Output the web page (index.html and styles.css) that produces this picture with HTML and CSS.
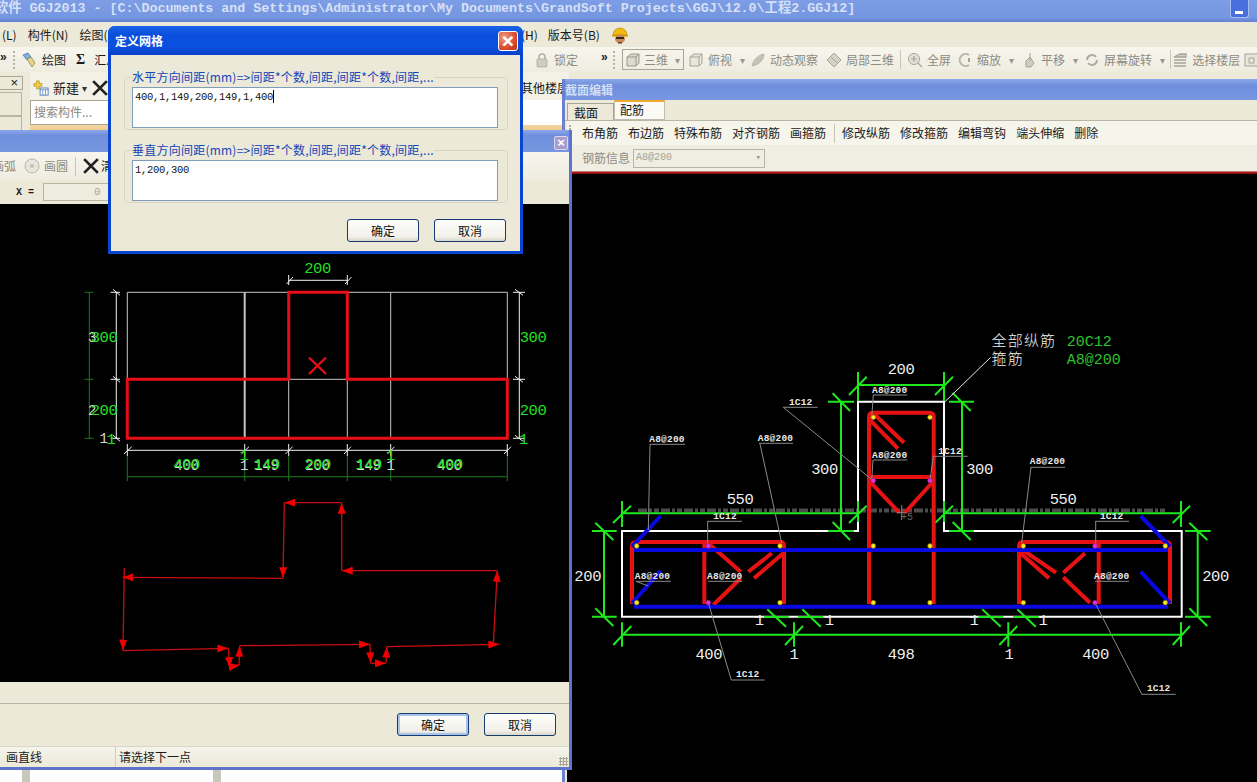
FILE: index.html
```html
<!DOCTYPE html>
<html lang="zh-CN">
<head>
<meta charset="utf-8">
<title>GGJ2013</title>
<link rel="stylesheet" href="styles.css">
</head>
<body>
<div class="desktop">

  <div class="app">
    <div class="app-title">
      <span class="app-title-text">软件 GGJ2013 - [C:\Documents and Settings\Administrator\My Documents\GrandSoft Projects\GGJ\12.0\工程2.GGJ12]</span>
      <span class="win-min"><i></i></span>
    </div>

    <div class="menu">
      <div class="menu-left">
        <span>(L)</span><span>构件(N)</span><span>绘图(D)</span>
      </div>
      <div class="menu-right">
        <span>(H)</span><span>版本号(B)</span>
        <svg class="helmet" viewBox="0 0 16 18"><path d="M1 9a7 7 0 0 1 14 0z" fill="#f2b90f" stroke="#a87a00" stroke-width=".6"/><path d="M0 9h16v1.6H0z" fill="#d69a00"/><ellipse cx="8" cy="13" rx="5" ry="4.4" fill="#c98a5a"/><path d="M4 11h8v2H4z" fill="#3a2418"/><path d="M6 16h4v1.5H6z" fill="#7a3a22"/></svg>
      </div>
    </div>

    <div class="tools">
      <div class="tools-left">
        <span class="chev">»</span><span class="grip grip-l"></span>
        <svg class="ic" viewBox="0 0 16 16"><path d="M2 3l5-2 3 4-4 3z" fill="#7fb2dc" stroke="#3c6a98" stroke-width=".7"/><path d="M6 7l4-2 4 6-3 4z" fill="#e5d48a" stroke="#8a7a3a" stroke-width=".7"/></svg>
        <span>绘图</span>
        <b class="sigma">Σ</b><span>汇总</span>
      </div>
      <div class="tools-right">
        <svg class="ic" viewBox="0 0 16 16"><path d="M5 7V5a3 3 0 0 1 6 0v2" fill="none" stroke="#b4b0a4" stroke-width="1.5"/><rect x="3" y="7" width="10" height="8" rx="1" fill="#cfccc0" stroke="#a8a498" stroke-width=".7"/></svg>
        <span class="off t-lock">锁定</span>
        <span class="chev t-chev">»</span><span class="grip"></span>
        <span class="combo3d">
          <svg class="ic" viewBox="0 0 16 16"><path d="M2 5l4-3h8v9l-3 3H2z" fill="#dcd9cd" stroke="#9a968a"/><path d="M2 5h9v9M11 5l3-3" fill="none" stroke="#9a968a"/></svg>
          <span class="off">三维</span><span class="caret">▾</span>
        </span>
        <svg class="ic" viewBox="0 0 16 16"><path d="M2 5l4-3h8v9l-3 3H2z" fill="#e8e5da" stroke="#a8a498"/><path d="M2 5h9v9M11 5l3-3" fill="none" stroke="#a8a498"/></svg>
        <span class="off">俯视</span><span class="caret">▾</span>
        <svg class="ic" viewBox="0 0 16 16"><path d="M2 14C3 8 8 3 14 2c0 6-5 11-12 12z" fill="#c6c3b6" stroke="#a8a498" stroke-width=".6"/></svg>
        <span class="off">动态观察</span>
        <svg class="ic i-local" viewBox="0 0 16 16"><path d="M8 1l7 7-7 7-7-7z" fill="#d4d1c5" stroke="#a8a498"/><path d="M4 4l8 8" stroke="#a8a498"/></svg>
        <span class="off">局部三维</span>
        <span class="sep"></span>
        <svg class="ic" viewBox="0 0 16 16"><circle cx="7" cy="7" r="5.5" fill="#e4e2d8" stroke="#a8a498"/><path d="M7 4v6M4 7h6M11 11l4 4" stroke="#a8a498" stroke-width="1.2"/></svg>
        <span class="off">全屏</span>
        <svg class="ic i-orbit" viewBox="0 0 16 16"><path d="M12 3a6 6 0 1 0 0 10" fill="none" stroke="#b8b5a8" stroke-width="2"/><path d="M12 6v4" stroke="#a8a498" stroke-width="2"/></svg>
        <span class="off">缩放</span><span class="caret">▾</span>
        <svg class="ic i-orbit" viewBox="0 0 16 16"><path d="M9 1v8M5 9l4-4 4 6-3 4H5z" fill="#d0cdc0" stroke="#a8a498"/></svg>
        <span class="off">平移</span><span class="caret">▾</span>
        <svg class="ic i-rot" viewBox="0 0 16 16"><path d="M3 8a5 5 0 0 1 9-3M13 8a5 5 0 0 1-9 3" fill="none" stroke="#aab0a4" stroke-width="2"/></svg>
        <span class="off">屏幕旋转</span><span class="caret">▾</span>
        <span class="sep sep-tight"></span>
        <svg class="ic i-floor" viewBox="0 0 16 16"><path d="M2 5l6-3h6v3H2zM2 8h12M2 11h12M2 14h12" fill="#d4d1c5" stroke="#a8a498" stroke-width="1.3"/></svg>
        <span class="off">选择楼层</span>
        <svg class="ic" viewBox="0 0 16 16"><rect x="1" y="2" width="13" height="12" fill="#e8e5da" stroke="#a8a498"/><path d="M5 6h5v5H5z" fill="none" stroke="#a8a498"/></svg>
      </div>
    </div>

    <div class="app-body">
      <div class="side">
        <div class="side-tab">×</div>
        <div class="side-box"></div>
        <div class="side-box short"></div>
      </div>
      <div class="pane">
        <div class="pane-bar">
          <div class="pane-tools">
            <svg class="ic" viewBox="0 0 18 18"><path d="M4 1h3v3h3v3H7v3H4V7H1V4h3z" fill="#f2d04a" stroke="#a88a1a" stroke-width=".7"/><rect x="8" y="9" width="9" height="8" fill="#fff" stroke="#4a78b0"/><path d="M8 11h9M11 11v6M14 11v6" stroke="#4a78b0" stroke-width=".8"/></svg>
            <span class="new-label">新建</span><span class="caret dark">▾</span>
            <svg class="ic x-ic" viewBox="0 0 14 14"><path d="M1 1l12 12M13 1L1 13" stroke="#222" stroke-width="2.4"/></svg>
          </div>
          <span class="pane-other">其他楼层</span>
        </div>
        <div class="pane-search"><span class="search">搜索构件...</span></div>
        <div class="pane-strip"></div>
      </div>
    </div>

    <div class="app-foot">
      <span class="foot-a"></span><span class="foot-bar"></span><span class="foot-b"></span><span class="foot-bar"></span>
    </div>
  </div>

  <!-- 截面编辑 window -->
  <section class="win win-section">
    <header class="sec-title">截面编辑</header>
    <div class="sec-tabs">
      <span class="tab">截面</span><span class="tab tab-on">配筋</span>
    </div>
    <div class="sec-bar">
      <span class="grip2"></span>
      <span>布角筋</span><span>布边筋</span><span>特殊布筋</span><span>对齐钢筋</span><span>画箍筋</span>
      <span class="sep"></span>
      <span>修改纵筋</span><span>修改箍筋</span><span>编辑弯钩</span><span>端头伸缩</span><span>删除</span>
    </div>
    <div class="sec-info">
      <span class="grip2"></span>
      <span class="off">钢筋信息</span>
      <span class="sec-combo"><span>A8@200</span><span class="caret">▾</span></span>
    </div>
    <div class="sec-rule"></div>
    <svg class="cad cad-right" viewBox="567 174 690 608">
      <path class="dots" d="M638 510.5H1167"/>

      <path class="sec-outline" d="M622 531H858V401.7H944V531H1181.7V616.7H622Z"/>

      <path class="g" d="M858 385H944M849 395L866.7 376.7M858 372V401M935 395L953 376.7M944 372V401"/>
      <path class="g" d="M841 401.7V531M828 401.7H854M832.7 393.3L850 411M828 531H854M832.7 522L850 540"/>
      <path class="g" d="M962 401.7V531M949 401.7H974M952.7 393L970.7 411M949 531H974M952.7 522L970.7 540"/>
      <path class="g" d="M622 513.3H858M613 523L631 505.7M622 501V527M849 523L866.7 505.7M858 501V522"/>
      <path class="g" d="M944 513.3H1181.7M935 523L953 505.7M944 501V522M1172.7 523L1190 505.7M1181 501V527"/>
      <path class="g" d="M604 531V616.7M592 531H616.7M595.3 522.7L613.3 540M592 616.7H616.7M595.3 608.3L613.3 626"/>
      <path class="g" d="M1197.7 531V616.7M1185 531H1210.7M1189.3 522.7L1207.3 540M1185 616.7H1210.7M1189.3 608.3L1207.3 626"/>
      <path class="g" d="M622 634.7H1181.7M622 622.3V646.7M613.3 645L631.3 626M794 622.3V646.7M785 645L803 626M1008.3 622.3V646.7M999.3 645L1017.3 626M1181 622.3V646.7M1172.7 645L1190 626"/>
      <path class="g" d="M764 617H788.7M767.3 609.3L786 626.7M798 617H823.3M802.3 609.3L820.7 626.7M978.3 617H1003.3M982.3 609.3L1000.7 626.7M1013 617H1038.7M1017.3 609.3L1035.7 626.7"/>

      <path class="red" d="M632 604V546Q632 542 636 542H780Q784 542 784 546V604M704.3 542V604M708.3 543.3L740.7 571.7M740.7 578.3L713.3 605M771.7 553.3L748.3 571.7M783.3 553.3L754 578.3"/>
      <path class="red" d="M869 604V417Q869 412.7 873 412.7H929Q933.7 412.7 933.7 417V604M869 477H933.7M873 413L904 442.7M870 420L898 448.7M870 481.7L899.3 512.7M931.7 483L905 512.7"/>
      <path class="red" d="M1019 604V546Q1019 542 1023 542H1166Q1170 542 1170 546V604M1098.7 542V604M1022.7 550L1056 572.7M1020 552.7L1049 578.3M1085 553.3L1063.3 572.7M1063.3 577.3L1090 602.7"/>
      <path class="blue" d="M634 550H1168M634 606.7H1168M632 546.7L660.7 516M632 603.3L660.7 570.7M1170 546.7L1140.7 516M1170 603.3L1140.7 571.7"/>

      <path class="leader" d="M650 444.3H685M650 444.3L648.3 530M759 443.3H793M760 444L781.7 543M783.3 407.3H817.7M783.3 407.3L873.3 480.7M873 395H907.3M873.3 395L871.7 417.3M873 460H907.3M873 460L871.7 480.7M707.7 521.3H742M707.7 521V546M636 581.3H671M636 581.3L648.3 586M708 581.3H742M731.3 680H764.7M731.3 680L708.3 602.7M933.3 456.3H967.7M933.3 456L930 480.7M1031 467.3H1065M1031 467L1021.7 543M1095.7 521.3H1129M1095.7 521V546M1095 581.3H1129M1141.7 694.3H1175.7M1141.7 694L1095 602.7M901.7 505V520M897 512.7H906"/>
      <path class="whiteline" d="M945 401.7L990.7 357.3"/>

      <g class="dots-y">
        <circle cx="636.7" cy="546" r="2.4"/><circle cx="780" cy="546" r="2.4"/><circle cx="636.7" cy="602.7" r="2.4"/><circle cx="780" cy="602.7" r="2.4"/><circle cx="873.3" cy="417.3" r="2.4"/><circle cx="873.3" cy="546" r="2.4"/><circle cx="873.3" cy="602.7" r="2.4"/><circle cx="930" cy="417.3" r="2.4"/><circle cx="930" cy="546" r="2.4"/><circle cx="930" cy="602.7" r="2.4"/><circle cx="1023.3" cy="546" r="2.4"/><circle cx="1023.3" cy="602.7" r="2.4"/><circle cx="1165.3" cy="546" r="2.4"/><circle cx="1165.3" cy="602.7" r="2.4"/>
      </g>
      <g class="dots-m">
        <circle cx="708.3" cy="546" r="2.4"/><circle cx="708.3" cy="602.7" r="2.4"/><circle cx="873.3" cy="480.7" r="2.4"/><circle cx="930" cy="480.7" r="2.4"/><circle cx="1095" cy="546" r="2.4"/><circle cx="1095" cy="602.7" r="2.4"/>
      </g>

      <g class="dimw">
        <text x="901" y="374">200</text><text x="824.5" y="474">300</text><text x="979.5" y="474">300</text>
        <text x="740" y="504">550</text><text x="1063" y="504">550</text>
        <text x="587.7" y="581">200</text><text x="1215.5" y="581">200</text>
        <text x="708.8" y="659">400</text><text x="794" y="659">1</text><text x="901" y="659">498</text><text x="1009" y="659">1</text><text x="1095.5" y="659">400</text>
        <text x="759.3" y="625">1</text><text x="829.3" y="625">1</text><text x="974" y="625">1</text><text x="1043" y="625">1</text>
      </g>
      <g class="lbl">
        <text x="667" y="441.7">A8@200</text><text x="775.5" y="440.7">A8@200</text><text x="800.7" y="404.7">1C12</text><text x="889.7" y="392.7">A8@200</text><text x="889.7" y="457.7">A8@200</text><text x="725" y="518.7">1C12</text><text x="652.5" y="578.7">A8@200</text><text x="724.8" y="578.7">A8@200</text><text x="747.7" y="676.7">1C12</text><text x="950" y="453.7">1C12</text><text x="1047.5" y="464.3">A8@200</text><text x="1111.7" y="518.7">1C12</text><text x="1111.8" y="578.7">A8@200</text><text x="1158.7" y="690.7">1C12</text>
      </g>
      <text class="mini" x="901" y="520">+5</text>
      <text class="cn" x="991.5" y="346">全部纵筋</text>
      <text class="cn" x="991.5" y="364">箍筋</text>
      <text class="cn-g" x="1066.7" y="346">20C12</text>
      <text class="cn-g" x="1066.7" y="364">A8@200</text>
    </svg>
  </section>

  <!-- 绘图 dialog behind 定义网格 -->
  <section class="win win-draw">
    <header class="draw-title"><span class="draw-close">×</span></header>
    <div class="draw-bar">
      <span class="off clip-arc">画弧</span>
      <svg class="ic i-radio" viewBox="0 0 16 16"><circle cx="8" cy="8" r="7" fill="#e8e6dc" stroke="#b8b5a8"/><circle cx="8" cy="8" r="2" fill="#c4c1b4"/></svg>
      <span class="off">画圆</span>
      <span class="sep"></span>
      <svg class="ic" viewBox="0 0 14 14"><path d="M1 1l12 12M13 1L1 13" stroke="#222" stroke-width="2.4"/></svg>
      <span class="clear">清除</span>
    </div>
    <div class="draw-coord">
      <span class="coord-label">X =</span>
      <span class="coord-input">0</span>
    </div>
    <svg class="cad cad-left" viewBox="0 204 569 478">
      <defs>
        <marker id="ah" markerUnits="userSpaceOnUse" markerWidth="12" markerHeight="8" refX="11" refY="4" orient="auto"><path d="M0 0L11 4L0 8Z" fill="#f00000"/></marker>
      </defs>
      <path class="grid" d="M127.3 292.3H507.3M127.3 379.3H507.3M127.3 292.3V438.3M288.7 292.3V438.3M347.3 292.3V438.3M390.7 292.3V438.3M507.3 292.3V438.3"/>
      <path class="grid thick" d="M244.7 292.3V438.3"/>
      <path class="tshape" d="M288.7 292.3H347.3V379.3H507.3V438.3H127.3V379.3H288.7Z"/>
      <path class="xmark" d="M309 357.5L326 374M326 357.5L309 374"/>

      <path class="wdim" d="M288.7 280.3H347.3M286.5 284L293 277M288.7 275V285M345 284L351.5 277M347.3 275V285"/>
      <path class="wdim" d="M116.3 292.3V438.3M110.7 292.3H120M113 289.3L120 295.3M110.7 379.3H120M113 376.3L120 382.3M110.7 438.3H120M113 435.3L120 441.3"/>
      <path class="wdim" d="M519.3 292.3V438.3M513 292.3H525M515 289.3L523 295.3M513 379.3H525M515 376.3L523 382.3M513 438.3H525M515 435.3L523 441.3"/>
      <path class="wdim" d="M127.3 450.3H507.3M124 454L131.7 446.7M127.3 444V456M241.5 454L249 446.7M244.7 444V456M285.5 454L292.5 446.7M288.7 444V456M344 454L351 446.7M347.3 444V456M387.5 454L394.5 446.7M390.7 444V456M504 454L511 446.7M507.3 444V456"/>
      <path class="ddim" d="M89.3 292.3V438.3M84.7 292.3H93.3M84.7 379.3H93.3M84.7 438.3H93.3M127.3 456V481M244.7 456V481M288.7 456V481M347.3 456V481M390.7 456V481M507.3 456V481M127.3 476.7H507.3"/>

      <path class="arrow" marker-end="url(#ah)" d="M341.7 502.7H284.3"/>
      <path class="arrow" marker-end="url(#ah)" d="M284.3 502.7L283 578.3"/>
      <path class="arrow" marker-end="url(#ah)" d="M283 578.3L122.5 577.3"/>
      <path class="arrow" marker-end="url(#ah)" d="M124.3 568L123 650.5"/>
      <path class="arrow" marker-end="url(#ah)" d="M122.7 650.7L228.3 648.3"/>
      <path class="arrow" marker-end="url(#ah)" d="M228.3 648.3L230 668"/>
      <path class="arrow" marker-end="url(#ah)" d="M230 667L239.5 665"/>
      <path class="arrow" marker-end="url(#ah)" d="M239 665L239.7 645.7"/>
      <path class="arrow" marker-end="url(#ah)" d="M239.7 645.7L370 644.3"/>
      <path class="arrow" marker-end="url(#ah)" d="M370 644.3L370.7 663.3"/>
      <path class="arrow" marker-end="url(#ah)" d="M370.7 663.3H386"/>
      <path class="arrow" marker-end="url(#ah)" d="M386 663.3L386.7 646.7"/>
      <path class="arrow" marker-end="url(#ah)" d="M386.7 646.7L499.3 644.3"/>
      <path class="arrow" marker-end="url(#ah)" d="M493.3 644.3L497.3 570.7"/>
      <path class="arrow" marker-end="url(#ah)" d="M497.3 570.7H341.7"/>
      <path class="arrow" marker-end="url(#ah)" d="M341.7 570.7V502.7"/>

      <g class="ghost">
        <text x="92" y="341.5">3</text><text x="92" y="415">2</text><text x="103.5" y="443">1</text>
        <text x="186.5" y="469.6">400</text><text x="266.5" y="469.6">149</text><text x="317.5" y="469.6">200</text><text x="368.5" y="469.6">149</text><text x="449.5" y="469.6">400</text>
        <text x="244" y="470">1</text><text x="390.5" y="470">1</text>
      </g>
      <g class="dimg">
        <text x="317.5" y="272.7">200</text>
        <text x="104" y="341.7">300</text><text x="104" y="415">200</text><text x="111" y="443.5">1</text>
        <text x="533" y="341.7">300</text><text x="533" y="415">200</text><text x="523.5" y="443.5">1</text>
        <text x="186.5" y="469">400</text><text x="266.5" y="469">149</text><text x="317.5" y="469">200</text><text x="368.5" y="469">149</text><text x="449.5" y="469">400</text>
        <text x="244" y="460">1</text><text x="390.5" y="460">1</text>
      </g>
    </svg>
    <div class="draw-foot">
      <div class="draw-gap"></div>
      <div class="draw-btns">
        <button class="xp-btn xp-default">确定</button>
        <button class="xp-btn">取消</button>
      </div>
    </div>
    <div class="status">
      <span class="st-a">画直线</span><span class="st-b">请选择下一点</span><span class="st-grip"></span>
    </div>
  </section>

  <!-- 定义网格 dialog -->
  <section class="win win-grid">
    <header class="grid-title"><span>定义网格</span><span class="grid-close">×</span></header>
    <div class="grid-body">
      <fieldset class="fs">
        <legend>水平方向间距(mm)=&gt;间距*个数,间距,间距*个数,间距,...</legend>
        <div class="ta">400,1,149,200,149,1,400<i class="caret-i"></i></div>
      </fieldset>
      <fieldset class="fs">
        <legend>垂直方向间距(mm)=&gt;间距*个数,间距,间距*个数,间距,...</legend>
        <div class="ta">1,200,300</div>
      </fieldset>
      <div class="grid-btns">
        <button class="xp-btn">确定</button>
        <button class="xp-btn">取消</button>
      </div>
    </div>
  </section>
</div>
</body>
</html>
```

FILE: styles.css
```css
* { box-sizing: border-box; }
html, body { margin: 0; padding: 0; }
body {
  width: 1257px; height: 782px; overflow: hidden;
  font: 12px/16px "Noto Sans CJK SC", "Liberation Sans", sans-serif;
  color: #1a1a1a; background: #ece9d8;
}
.desktop { position: relative; width: 1257px; height: 782px; overflow: hidden; }
.app { display: flex; flex-direction: column; height: 782px; }

.app-title {
  height: 22px; flex: none; display: flex; justify-content: space-between;
  background: linear-gradient(#7d9de6, #7596e0 80%, #6480d2);
  overflow: hidden; padding-right: 8px;
}
.app-title-text {
  margin-left: -5px; white-space: nowrap;
  font: 700 13.32px/18px "Liberation Mono", "Noto Sans CJK SC", monospace;
  color: #d6e0f6;
}
.win-min {
  width: 19px; height: 18px; background: #4a6fdc; border: 1px solid #a6bdf0; border-top: 0;
  border-radius: 0 0 3px 3px; display: flex; align-items: flex-end; padding: 0 0 3px 4px;
}
.win-min i { width: 8px; height: 3px; background: #fff; }

.menu { height: 25px; flex: none; display: flex; align-items: center; background: #ece9d8; }
.menu-left { width: 521px; flex: none; display: flex; gap: 11px; padding-left: 2px; }
.menu-right { display: flex; align-items: center; gap: 10px; }
.helmet { width: 16px; height: 18px; margin-left: 2px; }

.tools {
  height: 25px; flex: none; display: flex; align-items: center;
  background: linear-gradient(#f7f6ee, #efecdf);
}
.tools-left { width: 534px; flex: none; display: flex; align-items: center; gap: 5px; }
.tools-right { display: flex; align-items: center; gap: 4px; white-space: nowrap; flex: none; }
.ic { width: 16px; height: 16px; flex: none; }
.off { color: #8d8b82; }
.chev { font: 700 12px/14px "Liberation Sans", sans-serif; color: #222; margin-top: -6px; width: 8px; }
.grip { width: 3px; height: 18px; margin: 0 2px 0 0; border-left: 2px dotted #b5b2a4; flex: none; }
.grip-l { margin: 0; }
.sigma { font: 700 14px "Liberation Serif", serif; margin-left: 5px; margin-right: 4px; }
.t-lock { margin-right: 19px; }
.combo3d {
  width: 62px; height: 21px; display: flex; align-items: center; gap: 3px; padding-left: 2px;
  border: 1px solid #a9a594;
}
.caret { font-size: 10px; color: #9a988e; margin: 0 1px 0 4px; line-height: 12px; }
.caret.dark { color: #333; margin: 0; }
.combo3d .caret { margin: 0 0 0 4px; }
.sep { width: 1px; height: 19px; background: #c8c5b6; margin: 0 2px; flex: none; }
.sep-tight { margin-left: 0; }
.i-orbit { margin-left: 2px; }
.i-local { margin-left: 4px; }
.i-rot { margin-left: 1px; }
.i-floor { margin-left: -5px; }

.app-body { flex: 1; display: flex; background: #ece9d8; }
.side { width: 30px; flex: none; padding-top: 4px; }
.side-tab {
  width: 23px; height: 14px; border: 1px solid #aaa794; border-left: 0; text-align: right;
  padding-right: 4px; font: 13px/12px "Liberation Sans", sans-serif;
}
.side-box { width: 22px; height: 24px; margin-top: 2px; border: 1px solid #b8b5a4; border-left: 0; }
.side-box.short { height: 16px; margin-top: 0; }
.pane { width: 539px; flex: none; display: flex; flex-direction: column; }
.pane-bar {
  height: 28px; flex: none; display: flex; align-items: center; justify-content: space-between;
  background: #f3f1e6; padding: 4px 0 0 3px;
}
.pane-tools { display: flex; align-items: center; gap: 3px; }
.new-label { font-size: 13px; margin-left: 1px; }
.x-ic { margin-left: 2px; }
.pane-other { white-space: nowrap; }
.pane-search { height: 25px; flex: none; background: #fff; }
.search {
  display: block; width: 78px; height: 25px; border: 1px solid #a9a594; border-right: 0;
  color: #8a8880; font-size: 12px; line-height: 21px; padding-left: 3px;
}
.pane-strip { height: 6px; flex: none; background: linear-gradient(#f4d6a0, #eec98c); }
.app-foot { height: 12px; flex: none; display: flex; background: #fff; }
.foot-a { width: 22px; }
.foot-b { width: 183px; }
.foot-bar { width: 8px; background: #c9c8be; }

.win { position: absolute; }

/* section window */
.win-section {
  left: 562px; top: 79px; width: 695px; height: 703px;
  display: flex; flex-direction: column; background: #ece9d8;
  border-left: 3px solid #6b80d0;
}
.sec-title {
  height: 21px; flex: none;
  background: linear-gradient(#8aa7ea, #6f8fdc 30%, #7797e2);
  color: #d4def5; font-weight: 700; font-size: 12px; line-height: 22px;
}
.sec-tabs {
  height: 21px; flex: none; display: flex; align-items: flex-end; padding-left: 2px;
  border-bottom: 1px solid #b9b6a6;
}
.tab {
  width: 47px; height: 17px; background: #ece9d8; border: 1px solid #a9a594; border-bottom: 0;
  padding-left: 6px; line-height: 18px; font-size: 12px;
}
.tab-on {
  width: 51px; height: 20px; background: #fbfaf5; border: 1px solid #c0bdae; border-top: 2px solid #f0a830;
  padding-left: 5px; line-height: 15px;
}
.sec-bar {
  height: 24px; flex: none; display: flex; align-items: center; gap: 10px; padding: 0 0 0 2px;
  background: #f6f5ec; margin-left: 2px;
}
.sec-bar .sep { margin: 0 -3px 0 -2px; }
.grip2 { width: 3px; height: 16px; border-left: 2px dotted #b5b2a4; flex: none; }
.sec-info {
  height: 26px; flex: none; display: flex; align-items: center; padding-left: 2px; margin-left: 2px;
  background: #f0eee2;
}
.sec-info .off { margin-left: 10px; }
.sec-combo {
  width: 132px; height: 19px; margin-left: 3px; border: 1px solid #b8b5a4;
  display: flex; align-items: center; justify-content: space-between;
  color: #a5a398; font: 10px/14px "Liberation Mono", monospace; padding-left: 2px;
}
.sec-combo .caret { margin: 0 3px 0 0; font-size: 9px; }
.sec-rule { height: 3px; flex: none; margin-left: 2px; background: linear-gradient(#ecd9c8, #a81818 34%, #8a1010); }
.cad { display: block; background: #000; flex: none; }
.cad-right { width: 690px; height: 608px; margin-left: 2px; }
.cad text { white-space: pre; }
.sec-outline { fill: none; stroke: #fff; stroke-width: 2; }
.g { fill: none; stroke: #1fe81f; stroke-width: 2; }
.red { fill: none; stroke: #e81212; stroke-width: 4; }
.blue { fill: none; stroke: #0808e0; stroke-width: 4; }
.leader { fill: none; stroke: #8a8a8a; stroke-width: 1; }
.whiteline { fill: none; stroke: #e8e8e8; stroke-width: 1; }
.dots { fill: none; stroke: #4c4c4c; stroke-width: 4; stroke-dasharray: 9 2 3 2 5 2; }
.dots-y circle { fill: #f4ec20; stroke: #7a5a10; stroke-width: .6; }
.dots-m circle { fill: #e030e0; stroke: #7a207a; stroke-width: .6; }
.dimw text { font: 15.5px "Liberation Mono", monospace; fill: #f0f0f0; text-anchor: middle; letter-spacing: -.4px; }
.lbl text { font: 700 9.5px "Liberation Mono", monospace; fill: #eaeaea; text-anchor: middle; letter-spacing: .2px; }
.mini { font: 10px "Liberation Mono", monospace; fill: #666; }
.cn { font: 15px "Noto Sans CJK SC", sans-serif; fill: #f0f0f0; letter-spacing: 1.2px; font-weight: 300; }
.cn-g { font: 15px "Liberation Mono", monospace; fill: #2ec22e; }

/* drawing dialog */
.win-draw {
  left: 0; top: 130px; width: 572px; height: 640px;
  display: flex; flex-direction: column;
  background: #ece9d8;
  border-right: 3px solid #5f72cc; border-bottom: 3px solid #5f72cc;
}
.draw-title {
  height: 22px; flex: none; display: flex; justify-content: flex-end; align-items: center; padding-right: 1px;
  background: linear-gradient(#8aa7ea, #6f8fdc 25%, #7797e2);
}
.draw-close {
  width: 14px; height: 14px; margin-top: 3px; background: #a89ccf; border: 1px solid #dcd6ee; border-radius: 2px;
  color: #fff; font: 700 13px/11px "Liberation Sans", sans-serif; text-align: center;
}
.draw-bar {
  height: 28px; flex: none; display: flex; align-items: center; gap: 4px;
  background: linear-gradient(#f7f6ee, #efecdf);
}
.draw-bar .sep { margin: 0 3px; }
.clip-arc { margin-left: -8px; }
.i-radio { margin-left: 4px; }
.clear { margin-left: -2px; }
.draw-coord { height: 24px; flex: none; display: flex; align-items: center; background: #ece9d8; }
.coord-label { margin-left: 16px; width: 27px; font: 700 10px "Liberation Mono", monospace; }
.coord-input {
  width: 400px; height: 18px; border: 1px solid #b8b5a4; background: #efece0; color: #a8a69a;
  padding-left: 50px; font: 11px/16px "Liberation Mono", monospace;
}
.cad-left { width: 569px; height: 478px; }
.draw-foot { flex: 1; display: flex; flex-direction: column; background: #ece9d8; }
.draw-gap { height: 22px; flex: none; border-bottom: 1px solid #b8b5a8; }
.draw-btns { display: flex; justify-content: flex-end; gap: 15px; padding: 9px 13px 0 0; }
.xp-btn {
  width: 72px; height: 23px; padding: 0; border: 1px solid #163c6e; border-radius: 3px;
  background: linear-gradient(#fdfdfb, #f2f1ea 80%, #d8d5c8);
  font: 12px/18px "Noto Sans CJK SC", sans-serif; color: #111;
}
.xp-default { box-shadow: inset 0 0 0 2px #a6c4ec; }
.status {
  height: 21px; flex: none; display: flex; align-items: center;
  background: linear-gradient(#f5f4ec, #ece9d8); border-top: 1px solid #d8d5c6;
}
.st-a { width: 116px; padding-left: 6px; border-right: 1px solid #cfccbc; height: 20px; line-height: 20px; }
.st-b { flex: 1; padding-left: 3px; height: 20px; line-height: 20px; }
.st-grip { width: 9px; height: 9px; margin: 8px 1px 0 0; background: radial-gradient(circle, #a8a598 1px, transparent 1.2px) 0 0 / 3px 3px; }
.grid { fill: none; stroke: #c8c8c8; stroke-width: 1; }
.grid.thick { stroke-width: 2; stroke: #c4c4c4; }
.tshape { fill: none; stroke: #e80e16; stroke-width: 3; }
.xmark { fill: none; stroke: #e80e16; stroke-width: 2.4; }
.wdim { fill: none; stroke: #f2f2f2; stroke-width: 1; }
.ddim { fill: none; stroke: #1c7a1c; stroke-width: 1; }
.arrow { fill: none; stroke: #c80e0e; stroke-width: 1.3; }
.ghost text { font: 14px "Liberation Mono", monospace; fill: #d8d8d8; text-anchor: middle; letter-spacing: -.2px; }
.dimg text { font: 15.5px "Liberation Mono", monospace; fill: #22e022; text-anchor: middle; letter-spacing: -.4px; }

/* 定义网格 */
.win-grid {
  left: 108px; top: 26px; width: 415px; height: 228px;
  display: flex; flex-direction: column; background: #0a45d0;
  border-radius: 7px 7px 0 0; padding: 0 3px 3px;
}
.grid-title {
  height: 29px; flex: none; display: flex; align-items: center; justify-content: space-between;
  margin: 0 -3px; padding: 0 5px 0 7px; color: #fff; font-weight: 700; font-size: 12px;
  background: linear-gradient(#1a62e8, #0a4fdc 30%, #0a50e0 70%, #0840c8);
  border-radius: 7px 7px 0 0;
}
.grid-close {
  width: 20px; height: 20px; background: radial-gradient(circle at 30% 30%, #f09a80, #d8482a 65%, #bc3214);
  border: 1px solid #fff; border-radius: 3px; color: #fff;
  font: 700 21px/17px "Liberation Sans", sans-serif; text-align: center;
}
.grid-body { flex: 1; background: #ece9d8; padding: 13px 12px 0 13px; display: flex; flex-direction: column; }
.fs {
  margin: 3px 0 0; padding: 0 9px 0 7px; height: 59px; min-width: 0;
  border: 1px solid #d8d4c4; border-radius: 4px;
}
.fs + .fs { margin-top: 14px; }
.fs legend { padding: 0; color: #1446b8; font-size: 12px; line-height: 12px; white-space: nowrap; letter-spacing: .23px; }
.ta {
  height: 41px; margin-top: 4px; background: #fff; border: 1px solid #7f9db9; padding: 2px 0 0 2px;
  font: 10.5px/14px "Liberation Mono", monospace; letter-spacing: -.3px; color: #111;
}
.caret-i { display: inline-block; width: 1px; height: 13px; background: #000; vertical-align: -3px; }
.grid-btns { display: flex; justify-content: flex-end; gap: 15px; padding: 16px 2px 0 0; }
```
